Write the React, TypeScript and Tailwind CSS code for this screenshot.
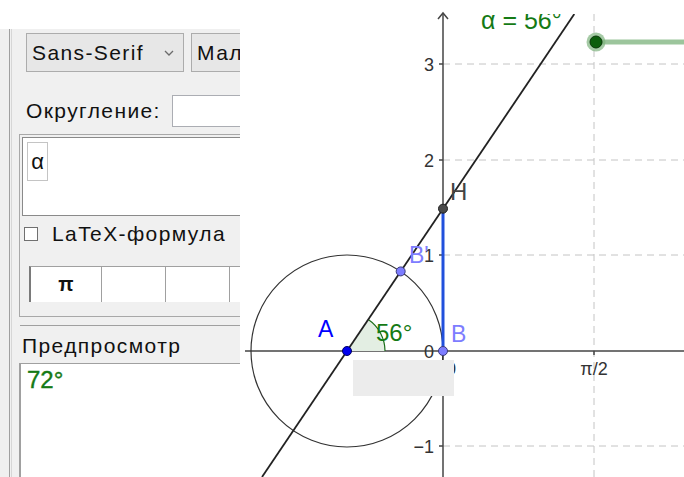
import React from 'react'

const SANS = 'Liberation Sans, Arial, sans-serif'

// geometry of the drawing (page pixels)
const DEG = (56 * Math.PI) / 180
const UNIT = 96
const OX = 443
const OY = 351
const AX = OX - UNIT
const TAN = Math.tan(DEG)
const H_Y = OY - UNIT * TAN
const BP_X = AX + UNIT * Math.cos(DEG)
const BP_Y = OY - UNIT * Math.sin(DEG)
const ARC = 38

const Chevron = () => (
  <svg width="10" height="6" viewBox="0 0 10 6">
    <path d="M1 1l4 4 4-4" fill="none" stroke="#6b6b6b" strokeWidth="1.3" />
  </svg>
)

function TextPanel() {
  return (
    <aside className="flex w-[240px] shrink-0 flex-col overflow-hidden text-[21px] tracking-[1.4px]">
      <div className="h-[29px] shrink-0 bg-white" />
      <div className="flex flex-1 bg-[#f0f0f0] pl-[9px]">
        <div className="w-px bg-[#a0a0a0]" />
        <div className="ml-px w-px bg-[#d6d6d6]" />
        <div className="flex min-w-0 flex-1 flex-col">
          {/* font family / size pickers */}
          <div className="mt-[4px] flex gap-[7px] pl-[14px]">
            <div className="flex h-[39px] w-[158px] shrink-0 items-center justify-between border border-[#acacac] bg-[#e7e7e7] pr-[9px] pl-[5px]">
              <span>Sans-Serif</span>
              <Chevron />
            </div>
            <div className="flex h-[39px] w-[90px] shrink-0 items-center border border-[#acacac] bg-[#e7e7e7] pl-[5px]">
              <span>Мал</span>
            </div>
          </div>

          <div className="mt-[23px] flex items-center gap-[10px] pl-[14px]">
            <span className="w-[136px] shrink-0 whitespace-nowrap">Округление:</span>
            <div className="h-[32px] w-[90px] shrink-0 border border-[#abadb3] bg-white" />
          </div>

          {/* edit group */}
          <div className="mt-[7px] ml-[7px] flex h-[183px] w-[260px] shrink-0 flex-col border-t border-b border-l border-[#a8a8a8]">
            <div className="mt-[2px] ml-[2px] h-[79px] border border-[#8a8a8a] bg-white">
              <div className="mt-[4px] ml-[4px] flex h-[39px] w-[21px] items-center justify-center border border-[#c4c4c4] text-[22px] tracking-normal">
                α
              </div>
            </div>
            <div className="mt-[6px] ml-[4px] flex h-[24px] items-center gap-[14px]">
              <div className="h-[14px] w-[14px] shrink-0 border border-[#707070] bg-white" />
              <span className="whitespace-nowrap">LaTeX-формула</span>
            </div>
            <div className="mt-[20px] ml-[9px] flex h-[36px] border-t border-l-2 border-[#a0a0a0] border-l-[#7a7a7a] bg-white">
              <div className="flex w-[71px] shrink-0 items-center justify-center border-r border-[#a0a0a0] pb-[2px] text-[20px] font-bold tracking-normal">
                π
              </div>
              <div className="w-[64px] shrink-0 border-r border-[#a0a0a0]" />
              <div className="w-[64px] shrink-0 border-r border-[#a0a0a0]" />
              <div className="w-[64px] shrink-0" />
            </div>
          </div>

          <div className="mt-[8px] ml-[8px] h-px shrink-0 bg-[#a0a0a0]" />
          <div className="mt-[8px] pl-[10px] leading-[23px] whitespace-nowrap">Предпросмотр</div>
          <div className="mt-[6px] ml-[7px] flex-1 border-t border-l-2 border-[#a0a0a0] bg-white pt-[1px] pl-[6px]">
            <span className="text-[24px] leading-[28px] tracking-normal text-[#157a15] [-webkit-text-stroke:0.4px_#157a15]">
              72°
            </span>
          </div>
        </div>
      </div>
    </aside>
  )
}

function Graphics() {
  const lineTopX = AX + (OY - 14) / TAN
  const lineBotX = AX - (477 - OY) / TAN
  const gridY = [64, 160, 255, 446]
  const yLabels: [number, string][] = [
    [64, '3'],
    [160, '2'],
    [255, '1'],
    [351, '0'],
    [446, '−1'],
  ]
  const arcEndX = AX + ARC * Math.cos(DEG)
  const arcEndY = OY - ARC * Math.sin(DEG)

  return (
    <svg width={444} height={477} viewBox="240 0 444 477" className="shrink-0" fontFamily={SANS}>
      <defs>
        <clipPath id="view">
          <rect x={244} y={14} width={440} height={463} />
        </clipPath>
      </defs>
      {/* axis arrow tip sits right on the view's top edge */}
      <path d={`M${OX - 5} 19L${OX} 13L${OX + 5} 19`} fill="none" stroke="#454545" strokeWidth="1.5" />
      <g clipPath="url(#view)">
        {/* grid */}
        <g stroke="#c4c4c4" strokeWidth="1" strokeDasharray="7 5">
          {gridY.map((y) => (
            <line key={y} x1={OX} y1={y} x2={684} y2={y} />
          ))}
          <line x1={594} y1={14} x2={594} y2={477} />
        </g>

        {/* axes */}
        <g stroke="#454545" strokeWidth="1.5" fill="none">
          <line x1={245} y1={OY} x2={684} y2={OY} />
          <line x1={OX} y1={13} x2={OX} y2={477} />
          <line x1={594} y1={OY} x2={594} y2={OY + 4} />
          {gridY.map((y) => (
            <line key={y} x1={OX - 4} y1={y} x2={OX} y2={y} />
          ))}
        </g>
        <g fontSize="18" fill="#333">
          {yLabels.map(([y, t]) => (
            <text key={t} x={434} y={y + 7} textAnchor="end">
              {t}
            </text>
          ))}
          <text x={451} y={375} textAnchor="middle">
            0
          </text>
          <text x={594} y={375} textAnchor="middle">
            π/2
          </text>
        </g>

        {/* angle at A */}
        <path
          d={`M${AX} ${OY}L${AX + ARC} ${OY}A${ARC} ${ARC} 0 0 0 ${arcEndX} ${arcEndY}Z`}
          fill="#e3eee3"
          stroke="none"
        />
        <path
          d={`M${AX + ARC} ${OY}A${ARC} ${ARC} 0 0 0 ${arcEndX} ${arcEndY}`}
          fill="none"
          stroke="#1a6e1a"
          strokeWidth="1.2"
        />

        {/* unit circle and line through A */}
        <circle cx={AX} cy={OY} r={UNIT} fill="none" stroke="#333" strokeWidth="1.2" />
        <line x1={lineBotX} y1={477} x2={lineTopX} y2={14} stroke="#222" strokeWidth="1.8" />
        <line x1={OX} y1={OY} x2={OX} y2={H_Y} stroke="#2150dc" strokeWidth="3" />

        {/* covered label area */}
        <rect x={353} y={360} width={101} height={36} fill="#ececec" />

        {/* slider */}
        <line x1={596} y1={42} x2={684} y2={42} stroke="#9cc59c" strokeWidth="5" />
        <circle cx={596} cy={42} r={9.5} fill="#7fb47f" fillOpacity="0.7" />
        <circle cx={596} cy={42} r={6} fill="#0b5e0b" stroke="#063806" strokeWidth="1" />
        <text x={481} y={29} fontSize="25" fill="#157a15">
          α = 56°
        </text>

        {/* points */}
        <circle cx={OX} cy={H_Y} r={4.5} fill="#4a4a4a" stroke="#1e1e1e" strokeWidth="1" />
        <circle cx={BP_X} cy={BP_Y} r={4.5} fill="#7d7dff" stroke="#3a3a7a" strokeWidth="1" />
        <circle cx={OX} cy={OY} r={4.5} fill="#7d7dff" stroke="#3a3a7a" strokeWidth="1" />
        <circle cx={AX} cy={OY} r={4.5} fill="#0000ee" stroke="#000066" strokeWidth="1" />

        {/* labels */}
        <text x={318} y={337} fontSize="23" fill="#0000ff">
          A
        </text>
        <text x={451} y={342} fontSize="23" fill="#7d7dff">
          B
        </text>
        <text x={409} y={263} fontSize="23" fill="#7d7dff">
          B'
        </text>
        <text x={450} y={200} fontSize="24" fill="#444">
          H
        </text>
        <text x={376} y={341} fontSize="24" fill="#157a15">
          56°
        </text>
      </g>
    </svg>
  )
}

export default function App() {
  return (
    <div className="flex h-[477px] w-[684px] overflow-hidden bg-white font-['Liberation_Sans',Arial,sans-serif] text-[#111]">
      <TextPanel />
      <Graphics />
    </div>
  )
}
